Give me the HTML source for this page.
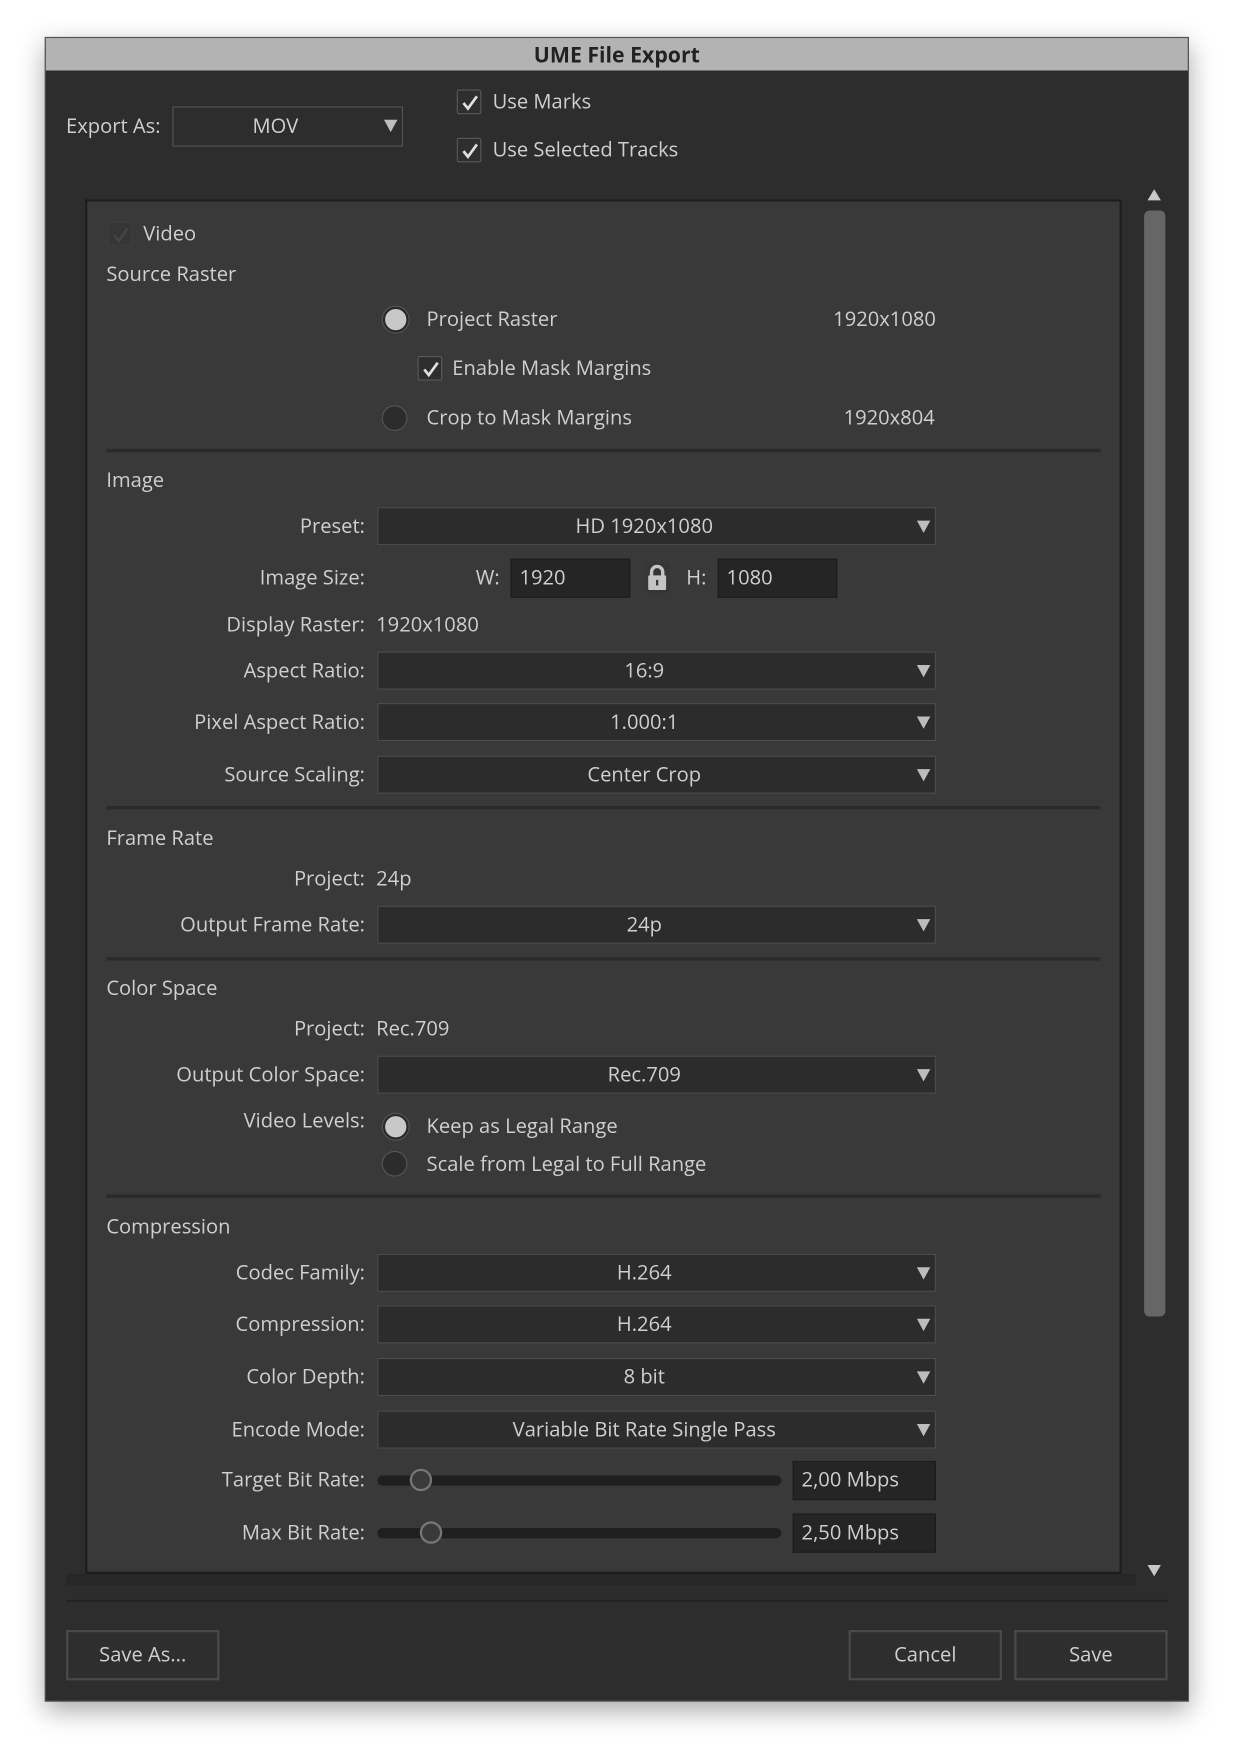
<!DOCTYPE html>
<html><head><meta charset="utf-8"><style>
html,body{margin:0;padding:0;background:#fff;width:1234px;height:1754px;overflow:hidden}
#s{position:absolute;left:0;top:0;width:1100px;height:1564px;transform:scale(1.1195);transform-origin:0 0;font-family:"Open Sans","Liberation Sans",sans-serif;color:#cfcfcf;font-size:18px}
.a{position:absolute}
.t{position:absolute;line-height:22px;white-space:nowrap}
.r{position:absolute;line-height:22px;white-space:nowrap;right:774px;text-align:right}
.dd{position:absolute;left:337px;width:475px;padding-right:22px;height:32px;background:#2c2c2c;border:1px solid #4d4d4d;text-align:center;line-height:32px}
.dd:after{content:"";position:absolute;right:4px;top:11px;border-left:6px solid transparent;border-right:6px solid transparent;border-top:11px solid #bdbdbd}
.sep{position:absolute;left:95px;width:888px;height:3px;background:#2a2a2a}
.cb{position:absolute;width:20px;height:20px;border:1px solid #5a5a5a;border-radius:2px;background:#2e2e2e}
.cb svg{position:absolute;left:1px;top:1px}
.rad{position:absolute;width:21px;height:21px;border-radius:50%;border:1px solid #555;background:#2c2c2c}
.rad.on{background:#c8c8c8;border:2px solid #2a2a2a;box-shadow:0 0 0 1px #555;width:19px;height:19px}
.inp{position:absolute;background:#252525;border:1px solid #1c1c1c;height:32px;line-height:32px;padding-left:7px;box-sizing:border-box}
.btn{position:absolute;border:2px solid #4a4a4a;height:45px;box-sizing:border-box;line-height:41px;text-align:center;background:#2e2e2e}
.trk{position:absolute;left:337px;width:361px;height:9px;border-radius:5px;background:#1f1f1f}
.knob{position:absolute;width:16px;height:16px;border-radius:50%;border:2px solid #777;background:#3a3a3a}
</style></head><body><div id="s">
<div class="a" style="box-shadow:0 8px 22px rgba(0,0,0,.35);left:40px;top:33px;width:1022px;height:1487px;background:#2f2f2f;border:1px solid #555;box-sizing:border-box"></div>
<div class="a" style="left:41px;top:34px;width:1020px;height:29px;background:#b3b3b3;border-bottom:1px solid #222"></div>
<div class="t" style="left:41px;width:1020px;top:38px;text-align:center;color:#222;font-weight:bold;font-size:19px">UME File Export</div>
<div class="a" style="left:41px;top:64px;width:1020px;height:1455px;background:#2d2d2d"></div>

<div class="t" style="left:59px;top:102px">Export As:</div>
<div class="dd" style="left:154px;width:182px;top:95px;height:34px;background:#2d2d2d;border-color:#555;line-height:34px">MOV</div>
<div class="cb" style="left:408px;top:80px"><svg width="20" height="20"><path d="M4 10 L8 15 L16 4" stroke="#e0e0e0" stroke-width="2.4" fill="none"/></svg></div>
<div class="t" style="left:440px;top:80px">Use Marks</div>
<div class="cb" style="left:408px;top:123px"><svg width="20" height="20"><path d="M4 10 L8 15 L16 4" stroke="#e0e0e0" stroke-width="2.4" fill="none"/></svg></div>
<div class="t" style="left:440px;top:123px">Use Selected Tracks</div>

<div class="a" style="left:76px;top:178px;width:926px;height:1228px;background:#393939;border:2px solid #1d1d1d;box-sizing:border-box"></div>
<div class="a" style="left:59px;top:1406px;width:956px;height:10px;background:#272727"></div>
<div class="a" style="left:59px;top:1429px;width:984px;height:2px;background:#242424"></div>
<div class="a" style="left:1025px;top:169px;border-left:6px solid transparent;border-right:6px solid transparent;border-bottom:10px solid #c8c8c8"></div>
<div class="a" style="left:1022px;top:188px;width:19px;height:988px;border-radius:5px;background:#666"></div>
<div class="a" style="left:1025px;top:1398px;border-left:6px solid transparent;border-right:6px solid transparent;border-top:10px solid #c8c8c8"></div>

<div class="cb" style="left:96px;top:198px;border-color:#3e3e3e;background:#363636"><svg width="20" height="20"><path d="M4 10 L8 15 L16 4" stroke="#444" stroke-width="2.4" fill="none"/></svg></div>
<div class="t" style="left:128px;top:198px">Video</div>
<div class="t" style="left:95px;top:234px">Source Raster</div>
<div class="rad on" style="left:342px;top:274px"></div>
<div class="t" style="left:381px;top:274px">Project Raster</div>
<div class="t" style="left:600px;width:236px;text-align:right;top:274px">1920x1080</div>
<div class="cb" style="left:373px;top:318px"><svg width="20" height="20"><path d="M4 10 L8 15 L16 4" stroke="#e0e0e0" stroke-width="2.4" fill="none"/></svg></div>
<div class="t" style="left:404px;top:318px">Enable Mask Margins</div>
<div class="rad" style="left:341px;top:362px"></div>
<div class="t" style="left:381px;top:362px">Crop to Mask Margins</div>
<div class="t" style="left:600px;width:235px;text-align:right;top:362px">1920x804</div>
<div class="sep" style="top:401px"></div>

<div class="t" style="left:95px;top:418px">Image</div>
<div class="r" style="top:459px">Preset:</div><div class="dd" style="top:453px">HD 1920x1080</div>
<div class="r" style="top:505px">Image Size:</div>
<div class="t" style="left:425px;top:505px">W:</div>
<div class="inp" style="left:456px;top:499px;width:107px;height:35px;line-height:33px">1920</div>
<svg class="a" style="left:576px;top:502px" width="22" height="28"><rect x="0" y="0" width="22" height="28" fill="#363636"/><path d="M6 13 V9 a5 5 0 0 1 10 0 V13" stroke="#c4c4c4" stroke-width="3" fill="none"/><rect x="3" y="12" width="16" height="13" rx="1" fill="#c4c4c4"/><rect x="10" y="16" width="2" height="5" fill="#363636"/></svg>
<div class="t" style="left:613px;top:505px">H:</div>
<div class="inp" style="left:641px;top:499px;width:107px;height:35px;line-height:33px">1080</div>
<div class="r" style="top:547px">Display Raster:</div><div class="t" style="left:336px;top:547px">1920x1080</div>
<div class="r" style="top:588px">Aspect Ratio:</div><div class="dd" style="top:582px">16:9</div>
<div class="r" style="top:634px">Pixel Aspect Ratio:</div><div class="dd" style="top:628px">1.000:1</div>
<div class="r" style="top:681px">Source Scaling:</div><div class="dd" style="top:675px">Center Crop</div>
<div class="sep" style="top:720px"></div>

<div class="t" style="left:95px;top:738px">Frame Rate</div>
<div class="r" style="top:774px">Project:</div><div class="t" style="left:336px;top:774px">24p</div>
<div class="r" style="top:815px">Output Frame Rate:</div><div class="dd" style="top:809px">24p</div>
<div class="sep" style="top:855px"></div>

<div class="t" style="left:95px;top:872px">Color Space</div>
<div class="r" style="top:908px">Project:</div><div class="t" style="left:336px;top:908px">Rec.709</div>
<div class="r" style="top:949px">Output Color Space:</div><div class="dd" style="top:943px">Rec.709</div>
<div class="r" style="top:990px">Video Levels:</div>
<div class="rad on" style="left:342px;top:995px"></div>
<div class="t" style="left:381px;top:995px">Keep as Legal Range</div>
<div class="rad" style="left:341px;top:1028px"></div>
<div class="t" style="left:381px;top:1029px">Scale from Legal to Full Range</div>
<div class="sep" style="top:1067px"></div>

<div class="t" style="left:95px;top:1085px">Compression</div>
<div class="r" style="top:1126px">Codec Family:</div><div class="dd" style="top:1120px">H.264</div>
<div class="r" style="top:1172px">Compression:</div><div class="dd" style="top:1166px">H.264</div>
<div class="r" style="top:1219px">Color Depth:</div><div class="dd" style="top:1213px">8 bit</div>
<div class="r" style="top:1266px">Encode Mode:</div><div class="dd" style="top:1260px">Variable Bit Rate Single Pass</div>
<div class="r" style="top:1311px">Target Bit Rate:</div>
<div class="trk" style="top:1318px"></div><div class="knob" style="left:366px;top:1312px"></div>
<div class="inp" style="left:708px;top:1305px;width:128px;height:35px;line-height:33px">2,00 Mbps</div>
<div class="r" style="top:1358px">Max Bit Rate:</div>
<div class="trk" style="top:1365px"></div><div class="knob" style="left:375px;top:1359px"></div>
<div class="inp" style="left:708px;top:1352px;width:128px;height:35px;line-height:33px">2,50 Mbps</div>

<div class="btn" style="left:59px;top:1456px;width:137px">Save As...</div>
<div class="btn" style="left:758px;top:1456px;width:137px">Cancel</div>
<div class="btn" style="left:906px;top:1456px;width:137px">Save</div>
</div></body></html>
